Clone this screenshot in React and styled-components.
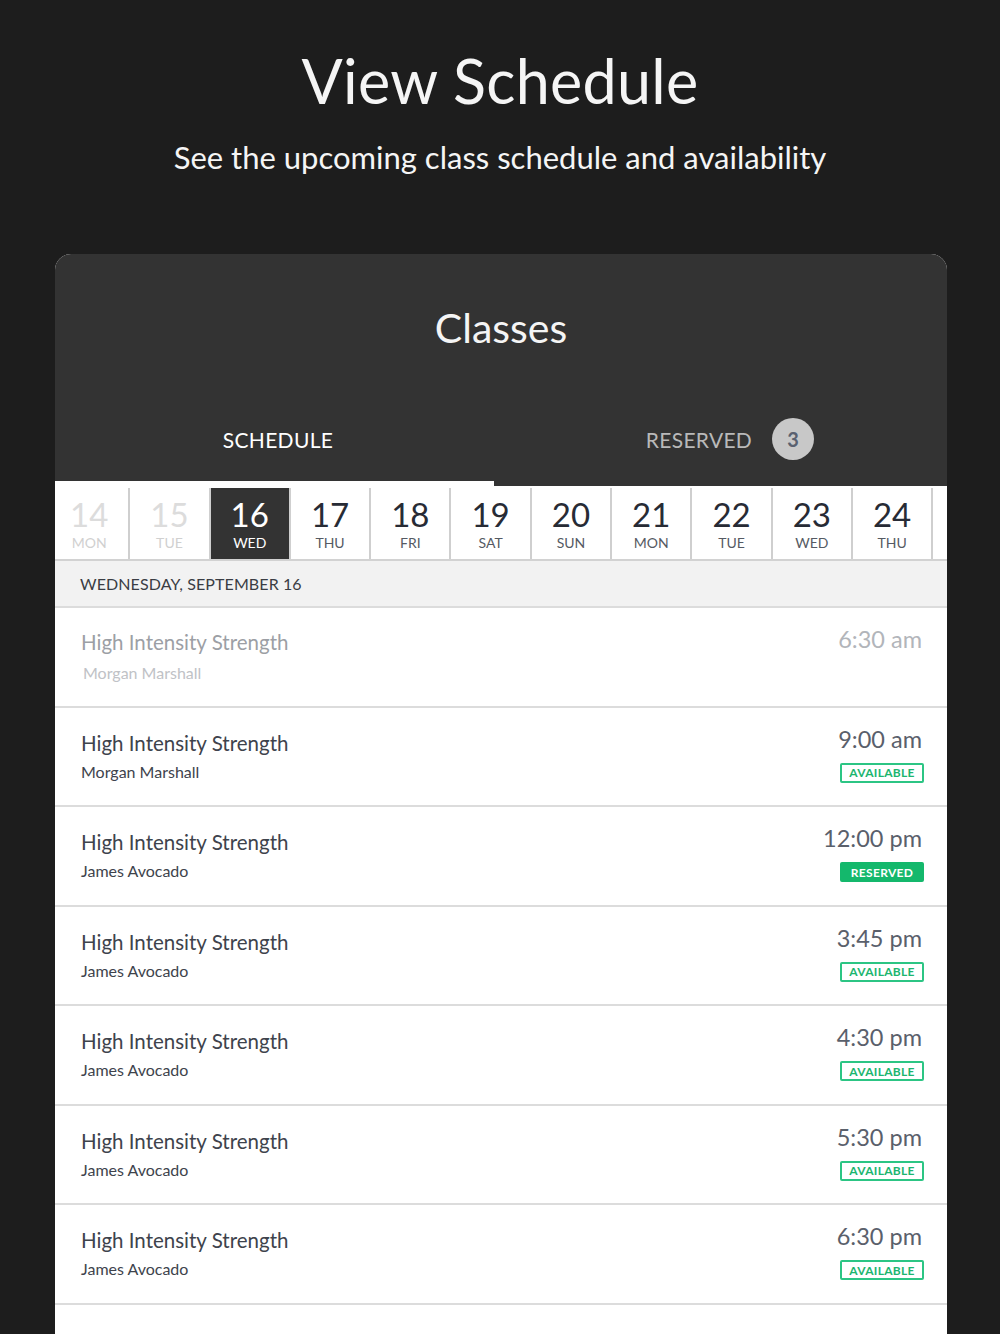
import React from "react";
import styled, { createGlobalStyle } from "styled-components";

const GlobalStyle = createGlobalStyle`
  html, body {
    margin: 0;
    padding: 0;
    background: #1d1d1d;
  }
  body {
    font-family: "Lato", "Open Sans", sans-serif;
    overflow: hidden;
  }
`;

const Page = styled.div`
  height: 1334px;
  overflow: hidden;
  background: #1d1d1d;
  padding-top: 40px;
  box-sizing: border-box;
`;

const Hero = styled.header`
  text-align: center;
  color: #f5f5f5;
`;

const Title = styled.h1`
  margin: 0;
  font-size: 61px;
  line-height: 82px;
  font-weight: 400;
  letter-spacing: 0.3px;
`;

const Subtitle = styled.p`
  margin: 12px 0 0;
  font-size: 31px;
  line-height: 46px;
  font-weight: 400;
`;

const Card = styled.section`
  width: 892px;
  margin: 74px 0 0 55px;
  background: #ffffff;
  border-radius: 16px 16px 0 0;
  overflow: hidden;
  height: 1080px;
`;

const CardHead = styled.div`
  background: #333333;
  padding-top: 50px;
`;

const CardTitle = styled.h2`
  margin: 0;
  text-align: center;
  color: #f5f5f5;
  font-size: 41px;
  line-height: 48px;
  font-weight: 400;
`;

const Tabs = styled.div`
  display: flex;
  height: 129px;
  align-items: flex-end;
`;

const Tab = styled.div`
  flex: 1;
  height: 82px;
  padding-bottom: 2px;
  box-sizing: border-box;
  display: flex;
  align-items: center;
  justify-content: center;
  gap: 20px;
  font-size: 21px;
  letter-spacing: 0.3px;
  color: ${(p) => (p.$active ? "#ffffff" : "#b9b9b9")};
  padding-left: ${(p) => (p.$active ? "6px" : "18px")};
`;

const Badge = styled.span`
  width: 42px;
  height: 42px;
  border-radius: 50%;
  background: #c8c8c8;
  color: #5a6170;
  font-size: 20px;
  font-weight: 700;
  display: flex;
  align-items: center;
  justify-content: center;
`;

const Indicator = styled.div`
  width: 439px;
  height: 5px;
  background: #ffffff;
  margin-bottom: 2px;
`;

const Strip = styled.div`
  background: #ffffff;
  border-bottom: 2px solid #d2d2d2;
  overflow: hidden;
`;

const Days = styled.div`
  display: flex;
  margin-left: -5px;
`;

const Day = styled.div`
  flex: 0 0 80.3px;
  height: 71px;
  box-sizing: border-box;
  border-right: 2px solid #cfcfcf;
  background: ${(p) => (p.$selected ? "#333333" : "#ffffff")};
  color: ${(p) =>
    p.$selected ? "#ffffff" : p.$past ? "#dcdcdc" : "#272b35"};
  display: flex;
  flex-direction: column;
  align-items: center;
  padding-top: 9px;
`;

const DayNum = styled.span`
  font-size: 33px;
  line-height: 34px;
  font-weight: 400;
`;

const DayName = styled.span`
  margin-top: 4px;
  font-size: 14px;
  line-height: 16px;
  color: ${(p) =>
    p.$selected ? "#ffffff" : p.$past ? "#d0d0d0" : "#555a63"};
`;

const DateHeader = styled.div`
  background: #f2f2f2;
  border-bottom: 2px solid #dcdcdc;
  height: 47px;
  display: flex;
  align-items: center;
  padding-left: 25px;
  padding-bottom: 1px;
  box-sizing: border-box;
  font-size: 16px;
  color: #3a3d44;
  letter-spacing: 0.1px;
`;

const Row = styled.div`
  height: 97.5px;
  border-bottom: 2px solid #dcdcdc;
  display: flex;
  justify-content: space-between;
  padding: 0 25px 0 26px;
`;

const Info = styled.div`
  display: flex;
  flex-direction: column;
  padding-top: ${(p) => (p.$past ? "20px" : "21px")};
`;

const ClassName = styled.span`
  font-size: 20.5px;
  line-height: 28px;
  color: ${(p) => (p.$past ? "#9c9fa5" : "#3e434c")};
`;

const Coach = styled.span`
  margin-top: ${(p) => (p.$past ? "6px" : "4px")};
  margin-left: ${(p) => (p.$past ? "2px" : "0")};
  font-size: 16px;
  line-height: 22px;
  color: ${(p) => (p.$past ? "#c0c2c6" : "#3e434c")};
`;

const Side = styled.div`
  display: flex;
  flex-direction: column;
  align-items: flex-end;
  padding-top: 16px;
`;

const Time = styled.span`
  font-size: 23.5px;
  line-height: 30px;
  color: ${(p) => (p.$past ? "#b2b5ba" : "#5a606b")};
`;

const Status = styled.span`
  margin-top: 9px;
  margin-right: -2px;
  width: 84px;
  height: 20px;
  box-sizing: border-box;
  border-radius: 2px;
  border: 2px solid ${(p) => (p.$reserved ? "#14b86c" : "#2cc584")};
  background: ${(p) => (p.$reserved ? "#14b86c" : "#ffffff")};
  color: ${(p) => (p.$reserved ? "#ffffff" : "#1cb56f")};
  font-size: 12px;
  font-weight: 700;
  letter-spacing: 0.3px;
  display: flex;
  align-items: center;
  justify-content: center;
`;

const days = [
  ["14", "MON", "past"],
  ["15", "TUE", "past"],
  ["16", "WED", "selected"],
  ["17", "THU"],
  ["18", "FRI"],
  ["19", "SAT"],
  ["20", "SUN"],
  ["21", "MON"],
  ["22", "TUE"],
  ["23", "WED"],
  ["24", "THU"],
];

const classes = [
  { coach: "Morgan Marshall", time: "6:30 am", past: true },
  { coach: "Morgan Marshall", time: "9:00 am", status: "AVAILABLE" },
  { coach: "James Avocado", time: "12:00 pm", status: "RESERVED" },
  { coach: "James Avocado", time: "3:45 pm", status: "AVAILABLE" },
  { coach: "James Avocado", time: "4:30 pm", status: "AVAILABLE" },
  { coach: "James Avocado", time: "5:30 pm", status: "AVAILABLE" },
  { coach: "James Avocado", time: "6:30 pm", status: "AVAILABLE" },
];

export default function App() {
  return (
    <Page>
      <GlobalStyle />
      <Hero>
        <Title>View Schedule</Title>
        <Subtitle>See the upcoming class schedule and availability</Subtitle>
      </Hero>
      <Card>
        <CardHead>
          <CardTitle>Classes</CardTitle>
          <Tabs>
            <Tab $active>SCHEDULE</Tab>
            <Tab>
              RESERVED
              <Badge>3</Badge>
            </Tab>
          </Tabs>
          <Indicator />
        </CardHead>
        <Strip>
          <Days>
            {days.map(([num, name, state]) => (
              <Day
                key={num}
                $past={state === "past"}
                $selected={state === "selected"}
              >
                <DayNum>{num}</DayNum>
                <DayName
                  $past={state === "past"}
                  $selected={state === "selected"}
                >
                  {name}
                </DayName>
              </Day>
            ))}
          </Days>
        </Strip>
        <DateHeader>WEDNESDAY, SEPTEMBER 16</DateHeader>
        {classes.map((c, i) => (
          <Row key={i}>
            <Info $past={c.past}>
              <ClassName $past={c.past}>High Intensity Strength</ClassName>
              <Coach $past={c.past}>{c.coach}</Coach>
            </Info>
            <Side>
              <Time $past={c.past}>{c.time}</Time>
              {c.status && (
                <Status $reserved={c.status === "RESERVED"}>{c.status}</Status>
              )}
            </Side>
          </Row>
        ))}
      </Card>
    </Page>
  );
}
